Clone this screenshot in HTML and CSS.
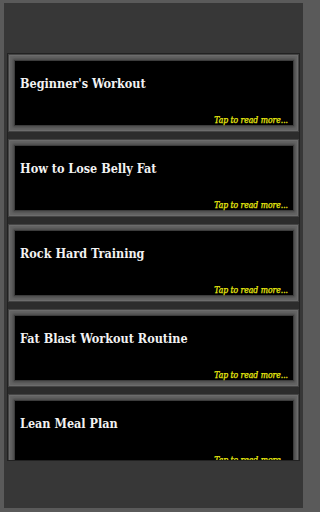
FILE: index.html
```html
<!DOCTYPE html>
<html>
<head>
<meta charset="utf-8">
<link rel="stylesheet" href="styles.css">
</head>
<body>
<div class="app">
  <div class="header"></div>
  <div class="list">
    <div class="card"><div class="inner"><div class="title">Beginner's Workout</div><div class="more">Tap to read more...</div></div></div>
    <div class="card"><div class="inner"><div class="title">How to Lose Belly Fat</div><div class="more">Tap to read more...</div></div></div>
    <div class="card"><div class="inner"><div class="title">Rock Hard Training</div><div class="more">Tap to read more...</div></div></div>
    <div class="card"><div class="inner"><div class="title">Fat Blast Workout Routine</div><div class="more">Tap to read more...</div></div></div>
    <div class="card"><div class="inner"><div class="title">Lean Meal Plan</div><div class="more">Tap to read more...</div></div></div>
  </div>
</div>
</body>
</html>
```
FILE: styles.css
```css
html, body { margin: 0; padding: 0; }
body {
  background: #5a5a5a;
  width: 307px;
  height: 512px;
  overflow: hidden;
  font-family: "DejaVu Serif", "Liberation Serif", serif;
}
.app {
  margin: 3px 4px 0 4px;
  height: 505px;
  background: #373737;
  display: flex;
  flex-direction: column;
}
.header { height: 50px; flex: none; }
.list {
  margin-left: 3px;
  width: 293px;
  height: 408px;
  box-sizing: border-box;
  border: 1px solid #222;
  background: #2c2c2c;
  overflow: hidden;
  display: flex;
  flex-direction: column;
  gap: 7px;
}
.card {
  flex: none;
  height: 78px;
  box-sizing: border-box;
  padding: 7px 6px 7px 7px;
  background: #5e5e5e;
  box-shadow: inset 0 0 0 1px #444, inset 0 0 0 2px #6c6c6c, inset 0 0 3px 4px #646464;
}
.inner {
  height: 64px;
  background: #000;
  box-shadow: 0 0 0 1px #3c3c3c, 0 0 2px 2px #4a4a4a;
  display: flex;
  flex-direction: column;
  justify-content: space-between;
  padding: 16px 5px 0 5px;
  box-sizing: border-box;
}
.title {
  color: #f2f2f2;
  font-weight: bold;
  font-size: 12.5px;
  font-stretch: condensed;
  line-height: 14px;
}
.more {
  align-self: flex-end;
  color: #eeee10;
  font-style: italic;
  font-size: 8.5px;
  font-stretch: condensed;
  line-height: 10px;
  -webkit-text-stroke: 0.25px #eeee10;
}
```
